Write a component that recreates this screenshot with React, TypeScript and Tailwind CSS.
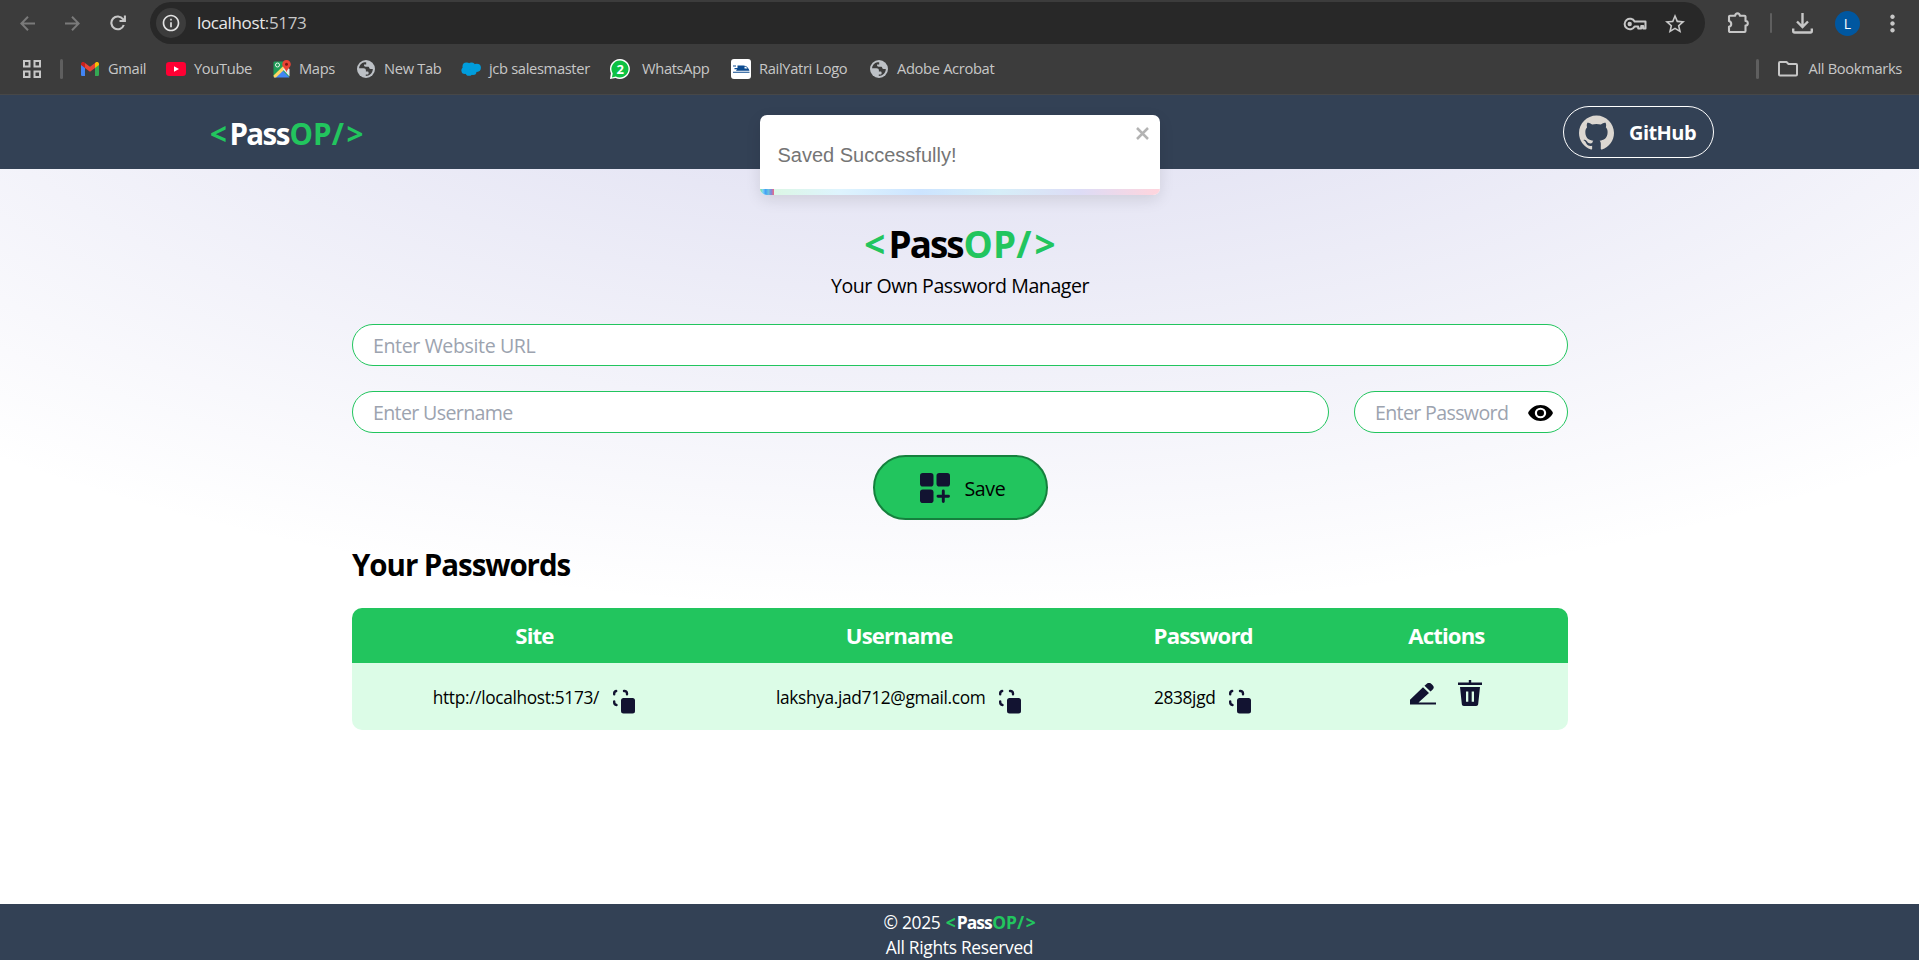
import { MdStarBorder, MdMoreVert, MdInfoOutline } from "react-icons/md";
import { SiGithub } from "react-icons/si";

const ink = "#121331";

function Brand({ className, pass }: { className: string; pass: string }) {
  return (
    <span className={`font-bold whitespace-nowrap text-[#22c55e] ${className}`}>
      <span className="mr-[0.085em]">&lt;</span>
      <span className={`tracking-[-0.053em] ${pass}`}>Pass</span>
      <span className="ml-[0.02em] tracking-[0.006em]">OP/</span>
      <span className="ml-[0.08em]">&gt;</span>
    </span>
  );
}

function GmailIcon() {
  return (
    <svg width="18" height="14" viewBox="0 0 18 14">
      <path d="M0 2v10.7C0 13.4.6 14 1.3 14H4V5.5z" fill="#4285f4" />
      <path d="M18 2v10.7c0 .7-.6 1.3-1.3 1.3H14V5.5z" fill="#34a853" />
      <path d="M14 .9V6l4-3V1.8C18 .2 16.1-.6 14.9.3z" fill="#fbbc04" />
      <path d="M4 6V.9l5 3.8 5-3.8V6L9 9.8z" fill="#ea4335" />
      <path d="M0 1.8V3l4 3V.9L3.2.3C1.9-.6 0 .2 0 1.8z" fill="#c5221f" />
    </svg>
  );
}

function YouTubeIcon() {
  return (
    <svg width="20" height="14" viewBox="0 0 20 14">
      <rect width="20" height="14" rx="3.2" fill="#ff0033" />
      <path d="M8 4.2v5.6L13 7z" fill="#fff" />
    </svg>
  );
}

function MapsIcon() {
  return (
    <svg width="18" height="18" viewBox="0 0 18 18">
      <path d="M1.5 1.5h10l4.5 6V17H1.5a1 1 0 0 1-1-1V2.5a1 1 0 0 1 1-1z" fill="#1e9d58" />
      <path d="M.8 17.5 8.5 9.5l8 8z" fill="#4285f4" />
      <path d="M.5 15.5 11 5.2l2.5 2.3L3 17.5H1z" fill="#fdd663" />
      <path d="M9.5 9 16.5 16.5V9l-3-2z" fill="#e8eaed" />
      <circle cx="4.5" cy="5" r="2" fill="none" stroke="#e8f5e9" strokeWidth="1" />
      <path d="M13.5 0a4.3 4.3 0 0 0-4.3 4.3c0 3 3.5 4.2 4.3 8.2.8-4 4.3-5.2 4.3-8.2A4.3 4.3 0 0 0 13.5 0z" fill="#ea4335" />
      <circle cx="13.5" cy="4.3" r="1.5" fill="#7b1b14" />
    </svg>
  );
}

function GlobeIcon() {
  return (
    <svg width="18" height="18" viewBox="0 0 18 18">
      <circle cx="9" cy="9" r="9" fill="#bdc1c6" />
      <path d="M7.2 2.2C4.2 2.9 2.2 5.4 2 8.3h4.5c1.7 0 2.4.7 2.4 2v1.2h1.6c.7 0 1.1.5 1.1 1.2v.8c0 .7-.5 1.1-1.1 1.1H8.8v1.4c3.8 0 7-3 7-7h-2.3c-.8 0-1.3-.5-1.3-1.2 0-.7-.5-1.1-1.2-1.1H8.6c-1 0-1.6-.6-1.6-1.6V4.5h2.2V2.2z" fill="#3c3c3c" />
    </svg>
  );
}

function CloudIcon() {
  return (
    <svg width="20" height="14" viewBox="0 0 20 14">
      <g fill="#009ddc">
        <circle cx="5.5" cy="4.5" r="4" />
        <circle cx="10.5" cy="4" r="3.6" />
        <circle cx="15.8" cy="5.8" r="4.1" />
        <circle cx="4" cy="8.5" r="3.6" />
        <circle cx="8" cy="10.4" r="3.4" />
        <circle cx="12" cy="9.5" r="3.5" />
      </g>
    </svg>
  );
}

function WhatsAppIcon() {
  return (
    <svg width="20" height="20" viewBox="0 0 20 20">
      <path d="M10 0a10 10 0 1 1-4.5 19L0 20l.9-5.8A10 10 0 0 1 10 0z" fill="#fff" />
      <path d="M10 1.5a8.5 8.5 0 1 1-4.2 15.9l-3.9 1 .8-4A8.5 8.5 0 0 1 10 1.5z" fill="#0dc143" />
      <text x="10" y="14.5" textAnchor="middle" fontSize="13" fontWeight="700" fill="#fff" fontFamily="Open Sans, sans-serif">
        2
      </text>
    </svg>
  );
}

function TrainIcon() {
  return (
    <svg width="20" height="20" viewBox="0 0 20 20">
      <rect width="20" height="20" rx="3" fill="#fff" />
      <path d="M6.5 6.5h6c3 0 5.5 3.2 6 5.2H5l1-1.5H3.5V9h3zM2 12.7h16.5v1H2zM2 6.5h3v1H2z" fill="#0b4a8f" />
      <path d="M13.5 7.8H15l1.5 1.7h-3z" fill="#fff" />
    </svg>
  );
}

function KeyIcon({ className }: { className: string }) {
  return (
    <svg className={className} width="24" height="14" viewBox="0 0 24 14" fill="none" stroke="currentColor" strokeWidth="2">
      <path d="M11.6 4.5H22.5V11.5h-2.3V9h-2v2.5h-3V9.5h-3.6A5.3 5.3 0 1 1 11.6 4.5z" strokeLinejoin="round" />
      <circle cx="6.7" cy="7" r="2.2" fill="currentColor" stroke="none" />
    </svg>
  );
}

const bookmarks = [
  { label: "Gmail", icon: <GmailIcon />, box: "w-[85px]", slot: "w-[27px]" },
  { label: "YouTube", icon: <YouTubeIcon />, box: "w-[107px]", slot: "w-[28px]" },
  { label: "Maps", icon: <MapsIcon />, box: "w-[84px]", slot: "w-[26px]" },
  { label: "New Tab", icon: <GlobeIcon />, box: "w-[104px]", slot: "w-[27px]" },
  { label: "jcb salesmaster", icon: <CloudIcon />, box: "w-[149px]", slot: "w-[28px]" },
  { label: "WhatsApp", icon: <WhatsAppIcon />, box: "w-[121px]", slot: "w-[32px]" },
  { label: "RailYatri Logo", icon: <TrainIcon />, box: "w-[139px]", slot: "w-[28px]" },
  { label: "Adobe Acrobat", icon: <GlobeIcon />, box: "w-[140px]", slot: "w-[27px]" },
];

function BrowserBar() {
  return (
    <div className="h-[95px] shrink-0 border-b border-[#474747] bg-[#3c3c3c] text-[#c7c7c7]">
      <div className="flex h-[46px] items-center pl-5">
        <svg width="60" height="15" viewBox="0 0 60 15" fill="none" stroke="#7a7a7a" strokeWidth="2">
          <path d="M15 7.5H1.5M8 .8 1.3 7.5 8 14.2M45 7.5h13.5M52 .8l6.7 6.7-6.7 6.7" />
        </svg>
        <svg className="ml-[30px]" width="16" height="16" viewBox="0 0 16 16" fill="none" stroke="currentColor" strokeWidth="2.1">
          <path d="M13.8 10A6.4 6.4 0 1 1 13 4.2L14.3 5.6M9.5 6h5.4V.6" />
        </svg>
        <div className="ml-[24px] flex h-[42px] w-[1555px] items-center rounded-full bg-[#282828] pr-[18px] pl-[6px]">
          <span className="flex size-[30px] items-center justify-center rounded-full bg-[#3c3c3c] text-[#e3e3e3]">
            <MdInfoOutline size={20} />
          </span>
          <span className="ml-[11px] text-[17px] tracking-[-0.022em] text-[#e8e8e8]">
            localhost<span className="text-[#c7c7c7]">:5173</span>
          </span>
          <KeyIcon className="mt-[2px] ml-auto" />
          <MdStarBorder className="mt-[2px] ml-[16px]" size={24} />
        </div>
        <svg className="ml-[22px]" width="24" height="22" viewBox="0 0 24 22" fill="none" stroke="currentColor" strokeWidth="2.1" strokeLinejoin="round">
          <path d="M3 3.7h5.2a2.3 2.3 0 0 1 4.6 0H17.5a1 1 0 0 1 1 1V9a2.3 2.3 0 0 1 0 4.6V19a1 1 0 0 1-1 1H3a1 1 0 0 1-1-1v-4.2a3 3 0 0 0 0-5.8V4.7a1 1 0 0 1 1-1z" />
        </svg>
        <span className="ml-[19px] h-5 w-[2px] rounded-full bg-[#5f5f5f]" />
        <svg className="ml-[20px]" width="21" height="21" viewBox="0 0 21 21" fill="none" stroke="currentColor" strokeWidth="2.4">
          <path d="M10.5 0v13.5M5 8.5l5.5 5.5L16 8.5M1.2 15.5v2.6c0 .8.6 1.4 1.4 1.4h15.8c.8 0 1.4-.6 1.4-1.4v-2.6" />
        </svg>
        <span className="ml-[22px] flex size-[25px] items-center justify-center rounded-full bg-[#0057a0] text-[14px] text-white">L</span>
        <MdMoreVert className="ml-[19px]" size={27} />
      </div>
      <div className="flex h-[46px] items-center pl-[23px] text-[14.7px] tracking-[-0.023em]">
        <svg width="18" height="18" viewBox="0 0 18 18" fill="none" stroke="currentColor" strokeWidth="2">
          <path d="M1 1h5.5v5.5H1zM11.5 1H17v5.5h-5.5zM1 11.5h5.5V17H1zM11.5 11.5H17V17h-5.5z" />
        </svg>
        <span className="mr-[18px] ml-[19px] h-5 w-[3px] rounded-full bg-[#5f5f5f]" />
        {bookmarks.map((b) => (
          <div key={b.label} className={`flex shrink-0 items-center ${b.box}`}>
            <span className={`shrink-0 ${b.slot}`}>{b.icon}</span>
            <span className="pb-[2px] whitespace-nowrap">{b.label}</span>
          </div>
        ))}
        <span className="ml-auto h-5 w-[3px] rounded-full bg-[#5f5f5f]" />
        <svg className="mr-[11px] ml-[19px]" width="20" height="16" viewBox="0 0 20 16" fill="none" stroke="currentColor" strokeWidth="2" strokeLinejoin="round">
          <path d="M1 2.5V13.5a1 1 0 0 0 1 1h16a1 1 0 0 0 1-1v-9.5a1 1 0 0 0-1-1h-7.5L8.500 1H2a1 1 0 0 0-1 1z" />
        </svg>
        <span className="mr-[17px] pb-[2px] whitespace-nowrap">All Bookmarks</span>
      </div>
    </div>
  );
}

function Toast() {
  return (
    <div className="absolute top-[115px] left-[760px] flex h-20 w-[400px] flex-col overflow-hidden rounded-[7px] bg-white font-['Liberation_Sans',Arial,sans-serif] shadow-[0_5px_15px_rgba(0,0,0,0.1)]">
      <div className="flex flex-1 justify-between pl-[17.5px]">
        <span className="mt-[25px] text-[20px] leading-[30px] text-[#757575]">Saved Successfully!</span>
        <svg className="mt-[12px] mr-[11px]" width="13" height="13" viewBox="0 0 13 13" fill="none" stroke="#b3b3b3" strokeWidth="2.5">
          <path d="M1 1l11 11M12 1 1 12" />
        </svg>
      </div>
      <div className="h-[6px] bg-[linear-gradient(to_right,#dbf7e0,#def4fe,#cce4ff,#d6eef8,#dddcf6,#ffd5dd)]">
        <div className="h-full w-[14px] bg-[linear-gradient(to_right,#4cd964,#5ac8fa,#007aff,#34aadc,#5856d6,#ff2d55)] opacity-70" />
      </div>
    </div>
  );
}

function CopyIcon() {
  return (
    <svg width="24" height="25" viewBox="0 0 24 25">
      <rect x="9" y="9" width="14" height="15.5" rx="2.5" fill={ink} />
      <path
        d="M2.2 5.2V4.5a2.5 2.5 0 0 1 2-2.5M12 2a2.5 2.5 0 0 1 3 2.5v.7M2.2 12.5v.8a2.7 2.7 0 0 0 2.3 2.7"
        fill="none"
        stroke={ink}
        strokeWidth="2.4"
        strokeLinecap="round"
      />
    </svg>
  );
}

function Cell({ text, className }: { text: string; className: string }) {
  return (
    <div className={`flex justify-center ${className}`}>
      <span className="pt-[20px] text-[17.3px] leading-[30px] tracking-[-0.019em]">{text}</span>
      <span className="mt-[26px] ml-[13px]">
        <CopyIcon />
      </span>
    </div>
  );
}

const field =
  "h-[42px] rounded-full border border-[#22c55e] bg-white px-[20px] text-[19.6px] placeholder:text-[#9ca3af] focus:outline-none";

export default function App() {
  return (
    <div className="relative flex h-[960px] w-[1919px] flex-col overflow-hidden bg-white font-['Open_Sans','Noto_Sans',sans-serif] text-black">
      <BrowserBar />
      <div className="flex flex-1 flex-col bg-[radial-gradient(ellipse_80%_80%_at_50%_-20%,rgba(120,119,198,0.3),rgba(255,255,255,0))]">
        <nav className="flex h-[74px] shrink-0 items-center justify-between bg-[#334155] pr-[205px] pl-[210px] text-white">
          <Brand className="pt-[4px] text-[29.5px]" pass="text-white" />
          <button className="flex h-[52px] w-[151px] items-center rounded-full border border-white pl-[15px]">
            <SiGithub size={35} color="#dcd7d1" />
            <span className="ml-[15px] pt-[2px] text-[20px] font-bold tracking-[-0.028em]">GitHub</span>
          </button>
        </nav>
        <main className="flex flex-1 flex-col pt-[53px] pr-[351px] pl-[352px]">
          <h1 className="flex h-[46px] items-center justify-center">
            <Brand className="text-[36.8px]" pass="text-black" />
          </h1>
          <p className="flex h-[36px] items-center justify-center text-[19.6px] tracking-[-0.024em]">
            Your Own Password Manager
          </p>
          <input className={`mt-[20px] w-full tracking-[-0.02em] ${field}`} placeholder="Enter Website URL" />
          <div className="mt-[25px] flex gap-[25px]">
            <input className={`min-w-0 flex-1 tracking-[-0.033em] ${field}`} placeholder="Enter Username" />
            <div className={`flex w-[214px] items-center tracking-[-0.033em] ${field}`}>
              <input className="w-[138px] pt-px placeholder:text-[#9ca3af] focus:outline-none" placeholder="Enter Password" />
              <svg className="mt-[2px] ml-[15px] shrink-0" width="25" height="16" viewBox="0 0 25 17" preserveAspectRatio="none">
                <path d="M12.5 0C7 0 2.2 3.5 0 8.5 2.2 13.5 7 17 12.5 17S22.8 13.5 25 8.5C22.8 3.5 18 0 12.5 0z" />
                <circle cx="12.5" cy="8.5" r="4.6" fill="none" stroke="#fff" strokeWidth="2.2" />
              </svg>
            </div>
          </div>
          <button className="mt-[22px] flex h-[65px] w-[175px] items-center self-center rounded-full border-[2.5px] border-[#15803d] bg-[#22c55e] pl-[45px]">
            <svg width="30" height="30" viewBox="0 0 30 30" fill={ink}>
              <rect width="13.5" height="13.5" rx="2.8" />
              <rect x="16.5" width="13.5" height="13.5" rx="2.8" />
              <rect y="16.5" width="13.5" height="13.5" rx="2.8" />
              <path d="M23.3 18v10.5M18 23.3h10.5" stroke={ink} strokeWidth="2.9" strokeLinecap="round" />
            </svg>
            <span className="ml-[15px] pt-[3px] text-[19.6px] tracking-[-0.022em]">Save</span>
          </button>
          <h2 className="mt-[25px] flex h-[40px] items-center text-[29.5px] font-bold tracking-[-0.036em]">Your Passwords</h2>
          <div className="mt-[23px] overflow-hidden rounded-[10px]">
            <div className="flex h-[55px] items-center bg-[#22c55e] text-center text-[22.2px] font-bold tracking-[-0.04em] text-white">
              <span className="w-[30%]">Site</span>
              <span className="w-[30%]">Username</span>
              <span className="w-[20%]">Password</span>
              <span className="w-[20%]">Actions</span>
            </div>
            <div className="flex h-[67px] bg-[#dcfce7]">
              <Cell text="http://localhost:5173/" className="w-[30%]" />
              <Cell text="lakshya.jad712@gmail.com" className="w-[30%]" />
              <Cell text="2838jgd" className="w-[20%]" />
              <div className="flex w-[20%] justify-center">
                <svg className="mt-[20px]" width="27" height="22" viewBox="0 0 27 23" preserveAspectRatio="none" fill={ink}>
                  <path d="M13 4.5 19 10.5 8.5 20.5H26v2H0v-5z" />
                  <path d="M14.5 3 16.5 1a3.5 3.5 0 0 1 5 0l1 1a3.5 3.5 0 0 1 0 5l-2 2z" />
                </svg>
                <svg className="mt-[17px] ml-[21px]" width="24" height="26" viewBox="0 0 24 26" fill={ink}>
                  <path
                    d="M10.8 0h2.4v2.5H24V5H0V2.5h10.8zM2 7h20l-1.8 17c-.1 1.2-.9 2-2 2H5.8c-1.1 0-1.9-.8-2-2zm6 4.5v10.3h2.3V11.5zm5.7 0v10.3H16V11.5z"
                    fillRule="evenodd"
                  />
                </svg>
              </div>
            </div>
          </div>
        </main>
        <footer className="flex h-[56px] shrink-0 flex-col items-center bg-[#334155] pt-[6px] text-[17.4px] leading-[25px] tracking-[-0.018em] text-white">
          <div>
            © 2025 <Brand className="ml-px" pass="text-white" />
          </div>
          <div>All Rights Reserved</div>
        </footer>
      </div>
      <Toast />
    </div>
  );
}
